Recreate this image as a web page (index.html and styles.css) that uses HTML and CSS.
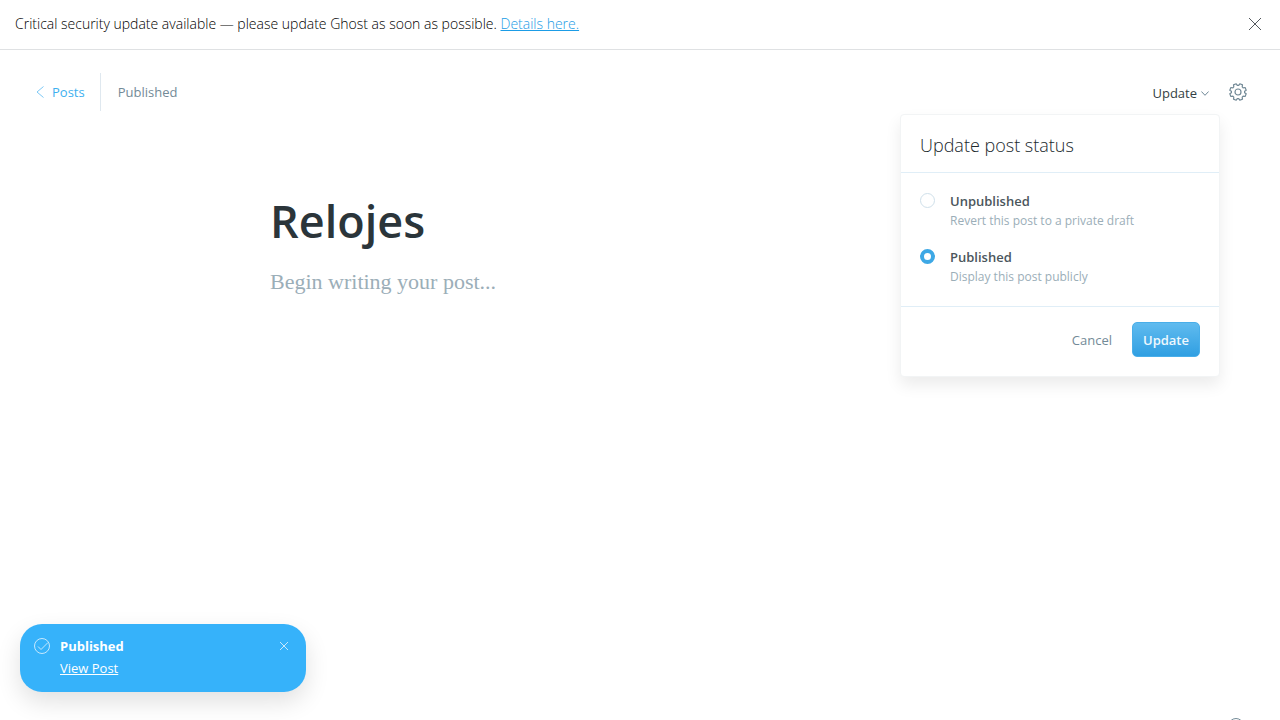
FILE: index.html
```html
<!DOCTYPE html>
<html lang="en">
<head>
<meta charset="utf-8">
<title>Editor - Relojes</title>
<link rel="stylesheet" href="styles.css">
</head>
<body>
<div class="app">
  <aside class="alert">
    <p class="alert-text">Critical security update available — please update Ghost as soon as possible. <a href="#">Details here.</a></p>
    <button class="icon-button" type="button" aria-label="Close alert">
      <svg width="12" height="12" viewBox="0 0 12 12" fill="none" stroke="#54595e"><path d="M0 0l12 12M12 0L0 12"/></svg>
    </button>
  </aside>

  <header class="toolbar">
    <a class="back" href="#">
      <svg width="8" height="12" viewBox="0 0 8 12" fill="none" stroke="#7cc8f5"><path d="M7.500.5L1 6l6.500 5.500"/></svg>
      Posts
    </a>
    <span class="status">Published</span>
    <div class="actions">
      <div class="publish">
        <button class="publish-trigger" type="button" aria-expanded="true">Update
          <svg width="8" height="5" viewBox="0 0 8 5" fill="none" stroke="#6d8796"><path d="M.4.500L4 4.300 7.600.5"/></svg>
        </button>
        <form class="menu">
          <h2 class="menu-title">Update post status</h2>
          <div class="menu-options">
            <label class="option">
              <input class="radio" type="radio" name="status">
              <span class="option-text"><strong>Unpublished</strong><span class="hint">Revert this post to a private draft</span></span>
            </label>
            <label class="option">
              <input class="radio" type="radio" name="status" checked>
              <span class="option-text"><strong>Published</strong><span class="hint">Display this post publicly</span></span>
            </label>
          </div>
          <div class="menu-footer">
            <button class="cancel" type="button">Cancel</button>
            <button class="update" type="button">Update</button>
          </div>
        </form>
      </div>
      <button class="icon-button" type="button" aria-label="Settings">
        <svg width="18" height="18" viewBox="0 0 18 18" fill="none" stroke="#738a97" stroke-width="1.200" stroke-linejoin="round"><circle cx="9" cy="9" r="3"/><path d="M17.200 10.800L16.100 13.500 14.100 13.200 13.200 14.100 13.500 16.100 10.800 17.200 9.700 15.600H8.300L7.200 17.200 4.500 16.100 4.800 14.100 3.900 13.200 1.900 13.500.8 10.800 2.400 9.700V8.300L.8 7.200 1.900 4.500 3.900 4.800 4.800 3.900 4.500 1.900 7.200.8 8.300 2.400H9.700L10.800.8 13.500 1.900 13.200 3.900 14.100 4.800 16.100 4.500 17.200 7.200 15.600 8.300V9.700z"/></svg>
      </button>
    </div>
  </header>

  <main class="editor">
    <h1 class="title">Relojes</h1>
    <p class="placeholder">Begin writing your post...</p>
  </main>

  <aside class="toast">
    <svg class="toast-check" width="16" height="16" viewBox="0 0 16 16" fill="none" stroke="#c6e8fd"><circle cx="8" cy="8" r="7.500"/><path d="M4 8.500L7 11.500 14 4.500"/></svg>
    <div class="toast-body"><strong>Published</strong><a href="#">View Post</a></div>
    <button class="icon-button toast-close" type="button" aria-label="Dismiss">
      <svg width="8" height="8" viewBox="0 0 8 8" fill="none" stroke="#c6e8fd"><path d="M0 0l8 8M8 0L0 8"/></svg>
    </button>
  </aside>

  <button class="icon-button help" type="button" aria-label="Help">
    <svg width="16" height="16" viewBox="0 0 16 16" fill="none" stroke="#738a97"><circle cx="8" cy="8" r="7.500"/></svg>
  </button>
</div>
</body>
</html>
```
FILE: styles.css
```css
* { box-sizing: border-box; }

body {
  margin: 0;
  background: #fff;
  color: #343f44;
  font: 13px/20px "Segoe UI", "Open Sans", sans-serif;
}

h1, h2, p { margin: 0; }
a { color: #3eb0ef; }
button { border: 0; padding: 0; background: none; color: inherit; font: inherit; }
svg { display: block; flex: none; }

.app {
  position: relative;
  height: 100vh;
  overflow: hidden;
}

.icon-button { display: grid; place-items: center; }

.alert {
  display: flex;
  align-items: center;
  justify-content: space-between;
  height: 50px;
  padding: 0 19px 2px 15px;
  border-bottom: 1px solid #dfe1e3;
}
.alert-text { font-size: 14px; font-weight: 300; color: #000; }
.alert-text a { color: #1b9ce6; }

.toolbar {
  display: flex;
  align-items: center;
  padding: 23px 33px 0 36px;
}
.back {
  display: flex;
  align-items: center;
  gap: 8px;
  height: 38px;
  padding-right: 15px;
  border-right: 1px solid #dfe8ef;
  text-decoration: none;
}
.status { padding-left: 17px; color: #738a97; }
.actions {
  display: flex;
  align-items: center;
  gap: 20px;
  margin-left: auto;
}
.publish { position: relative; padding-top: 2px; }
.publish-trigger {
  display: flex;
  align-items: center;
  gap: 4px;
}

.menu {
  position: absolute;
  top: 33px;
  right: -11px;
  width: 320px;
  border: 1px solid #f2f4f5;
  border-radius: 4px;
  background: #fff;
  box-shadow: 0 8px 16px rgba(0, 0, 0, .08);
}
.menu-title {
  padding: 20px 19px 17px;
  border-bottom: 1px solid #e0eef7;
  color: #20282c;
  font-size: 18px;
  font-weight: 300;
}
.menu-options {
  display: grid;
  gap: 16px;
  padding: 18px 19px 19px;
}
.option {
  display: flex;
  align-items: flex-start;
  gap: 15px;
}
.radio {
  appearance: none;
  width: 15px;
  height: 15px;
  margin: 2px 0 0;
  border: 1px solid #cfe0ea;
  border-radius: 50%;
  background: #fff;
}
.radio:checked { border: 4px solid #3ea8e5; }
.option-text { display: grid; color: #4b565c; }
.option-text strong { font-weight: 600; }
.hint { color: #9baeb8; font-size: 12px; }
.menu-footer {
  display: flex;
  align-items: center;
  justify-content: flex-end;
  gap: 20px;
  padding: 15px 19px 19px;
  border-top: 1px solid #e0eef7;
}
.cancel { color: #738a97; }
.update {
  height: 35px;
  padding: 0 10px;
  border: 1px solid #49aee9;
  border-radius: 5px;
  background: linear-gradient(#60bbef, #309fe2);
  color: #eef8fe;
  font-weight: 600;
}

.editor {
  max-width: 740px;
  margin: 0 auto;
  padding-top: 80px;
}
.title {
  color: #2b353a;
  font-size: 45px;
  font-weight: 600;
  line-height: 60px;
}
.placeholder {
  padding-top: 16px;
  color: #9baeb8;
  font: 22px/30px Georgia, "Liberation Serif", serif;
}

.toast {
  position: absolute;
  left: 20px;
  bottom: 28px;
  display: flex;
  align-items: flex-start;
  gap: 10px;
  width: 286px;
  padding: 12px 18px 14px 14px;
  border-radius: 22px;
  background: #36b2fa;
  color: #fff;
  box-shadow: 0 10px 24px rgba(0, 0, 0, .12);
}
.toast-check { margin-top: 2px; }
.toast-body { display: grid; gap: 2px; }
.toast-body a { color: #fff; }
.toast-close { height: 20px; margin-left: auto; }

.help {
  position: absolute;
  right: 36px;
  bottom: -14px;
}
```
